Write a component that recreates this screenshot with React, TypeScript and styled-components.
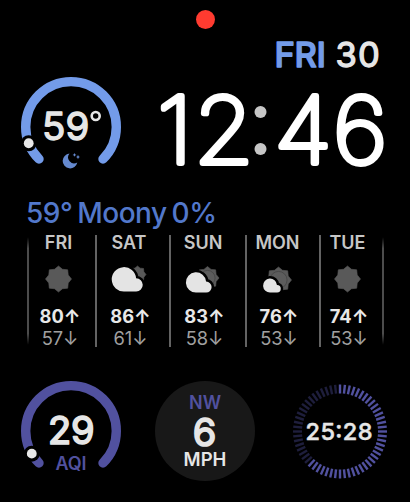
import React from 'react';
import styled, { createGlobalStyle } from 'styled-components';

const Global = createGlobalStyle`
  * { box-sizing: border-box; }
  body { margin: 0; background: #000; }
`;

const face = 'Inter, "Liberation Sans", sans-serif';

const Watch = styled.main`
  width: 410px;
  height: 502px;
  overflow: hidden;
  background: #000;
  color: #e6e6e6;
  font-family: ${face};
  display: flex;
  flex-direction: column;
`;

const StatusBar = styled.header`
  height: 39px;
  padding-top: 10px;
  display: flex;
  justify-content: center;
`;

const RedDot = styled.span`
  width: 19px;
  height: 19px;
  border-radius: 50%;
  background: #ff3b30;
`;

const Top = styled.section`
  height: 155px;
  display: grid;
  grid-template-columns: 155px 235px;
`;

const GaugeSlot = styled.div`
  padding: 35px 0 0 18px;
`;

const Clock = styled.div`
  display: flex;
  flex-direction: column;
`;

const Drawing = styled.svg`
  display: block;
  overflow: visible;
  flex: none;
`;

const Numerals = styled.text<{ $size: number; $weight: number; $stroke?: number; $color?: string }>`
  font-family: ${face};
  font-size: ${p => p.$size}px;
  font-weight: ${p => p.$weight};
  fill: ${p => p.$color ?? '#e6e6e6'};
  stroke: ${p => p.$color ?? '#e6e6e6'};
  stroke-width: ${p => p.$stroke ?? 0}px;
  stroke-linejoin: round;
  stroke-linecap: round;
`;

const Headline = styled.h1`
  margin: 0;
  height: 41px;
  padding: 0 0 0 26px;
  line-height: 38px;
  font-size: 28px;
  font-weight: 550;
  letter-spacing: -0.5px;
  word-spacing: -2px;
  color: #5278cb;
  white-space: pre;
`;

const Forecast = styled.section`
  height: 112px;
  margin-left: 27px;
  display: flex;
`;

const Rule = styled.i<{ $edge?: boolean }>`
  width: 2px;
  flex: none;
  background: ${p => (p.$edge ? 'linear-gradient(transparent 2%, #4c4c4c 12%, #4c4c4c 88%, transparent 98%)' : '#636363')};
`;

const Day = styled.div<{ $w: number }>`
  width: ${p => p.$w}px;
  flex: none;
`;

const DayStack = styled.div<{ $w: number }>`
  width: ${p => p.$w}px;
  display: flex;
  flex-direction: column;
  align-items: center;
`;

const DayName = styled.span`
  height: 16px;
  line-height: 16px;
  font-size: 18px;
  font-weight: 600;
  color: #c6c6c6;
`;

const IconBox = styled.span`
  height: 54px;
  display: flex;
  align-items: center;
`;

const Temp = styled.span<{ $low?: boolean }>`
  height: 21.5px;
  line-height: ${p => (p.$low ? 22 : 23)}px;
  padding-left: 3px;
  font-size: 18.3px;
  white-space: pre;
  font-weight: ${p => (p.$low ? 400 : 700)};
  color: ${p => (p.$low ? '#a0a0a0' : '#e8e8e8')};
`;

const Bottom = styled.section`
  height: 155px;
  padding: 31px 18px 0 18px;
  display: flex;
`;

const Wind = styled.div`
  width: 100px;
  height: 100px;
  margin: 3px 35px 0 31px;
  padding-top: 12px;
  border-radius: 50%;
  background: #181818;
  display: flex;
  flex-direction: column;
  align-items: center;
`;

const WindLabel = styled.span<{ $accent?: boolean }>`
  height: 19px;
  line-height: 19px;
  font-size: ${p => (p.$accent ? 18 : 18.5)}px;
  font-weight: 600;
  color: ${p => (p.$accent ? '#51519f' : '#e6e6e6')};
`;

const Gauge = ({ color, angle, children }: { color: string; angle: number; children: React.ReactNode }) => {
  const a = (angle * Math.PI) / 180;
  const mx = 53 + 45.3 * Math.cos(a);
  const my = 53 + 45.3 * Math.sin(a);
  return (
    <Drawing width="106" height="106" viewBox="0 0 106 106">
      <path d="M21 85A45.3 45.3 0 1 1 85 85" fill="none" stroke={color} strokeWidth="9.4" strokeLinecap="round" />
      <circle cx={mx} cy={my} r="8" fill="#000" />
      <circle cx={mx} cy={my} r="4.9" fill="#e8e8e8" />
      {children}
    </Drawing>
  );
};

const sunPoints = (cx: number, cy: number, r: number) =>
  Array.from({ length: 16 }, (_, i) => {
    const rr = i % 2 ? r * 0.81 : r;
    const t = (i * Math.PI) / 8;
    return `${cx + rr * Math.sin(t)},${cy - rr * Math.cos(t)}`;
  }).join(' ');

const Sun = ({ x, y, r = 13, ring = false }: { x: number; y: number; r?: number; ring?: boolean }) => (
  <>
    <polygon points={sunPoints(x, y, r)} fill="#595959" stroke="#595959" strokeWidth="0.6" strokeLinejoin="round" />
    {ring && <circle cx={x} cy={y} r={r * 0.66} fill="#5c5c5c" stroke="#484848" strokeWidth="1" />}
  </>
);

const Cloud = ({ x, y, scale }: { x: number; y: number; scale: number }) => (
  <path
    d="M12 24.500A12.200 12.200 0 1 1 23.600 11.300A6.600 6.600 0 0 1 23.700 24.500Z"
    transform={`translate(${x} ${y}) scale(${scale})`}
    fill="#e4e4e4"
    stroke="#000"
    strokeWidth={5 / scale}
    paintOrder="stroke"
  />
);

const Weather = ({ kind }: { kind: string }) => (
  <Drawing width="34" height="30" viewBox="0 0 34 30">
    {kind === 'sun' && <Sun x={16.5} y={16} />}
    {kind === 'cloudy' && (
      <>
        <Sun x={25.5} y={11.5} r={8.5} />
        <Cloud x={0.5} y={4} scale={1} />
      </>
    )}
    {kind === 'partly' && (
      <>
        <Sun x={21.5} y={15} r={11.5} ring />
        <Cloud x={0.5} y={9.2} scale={0.83} />
      </>
    )}
    {kind === 'mostly' && (
      <>
        <Sun x={17.5} y={17} r={13} ring />
        <Cloud x={2.5} y={15.5} scale={0.57} />
      </>
    )}
  </Drawing>
);

const days = [
  { name: 'FRI', kind: 'sun', hi: 80, lo: 57, w: 66, inner: 59 },
  { name: 'SAT', kind: 'cloudy', hi: 86, lo: 61, w: 72, inner: 64 },
  { name: 'SUN', kind: 'partly', hi: 83, lo: 58, w: 74, inner: 64 },
  { name: 'MON', kind: 'mostly', hi: 76, lo: 53, w: 72, inner: 61 },
  { name: 'TUE', kind: 'sun', hi: 74, lo: 53, w: 61, inner: 53 },
];

export default function App() {
  return (
    <>
      <Global />
      <Watch>
        <StatusBar><RedDot /></StatusBar>
        <Top>
          <GaugeSlot>
            <Gauge color="#739be9" angle={159}>
              <Numerals x="24 47.5" y="66" $size={38.5} $weight={400} $stroke={1.3}>59</Numerals>
              <circle cx="77.700" cy="42" r="4" fill="none" stroke="#e6e6e6" strokeWidth="2.600" />
              <path d="M51.500 79.600A7.400 7.400 0 1 0 59.300 88.500A6 6 0 0 1 51.500 79.600Z" fill="#6589cf" />
              <path d="M56.500 79l.6 1.300 1.300.6-1.300.6-.6 1.300-.6-1.300-1.300-.6 1.300-.6zM60 80.800l.6 1.500 1.300.7-1.300.7-.6 1.500-.6-1.500-1.300-.7 1.300-.7z" fill="#6589cf" />
            </Gauge>
          </GaugeSlot>
          <Clock>
            <Drawing width="226" height="32">
              <Numerals x="119.500" y="27.500" $size={34.5} $weight={500} $stroke={1.4} $color="#739be9" textLength="51.500">FRI</Numerals>
              <Numerals x="180.500 203" y="27.500" $size={34.5} $weight={400} $stroke={1.3}>30</Numerals>
            </Drawing>
            <Drawing width="235" height="110">
              <Numerals x="1.8 36.5 112.6 167.8" y="91.800" transform="scale(1.06 1)" $size={91.5} $weight={100} $stroke={5.8} $color="#fff">1246</Numerals>
              <circle cx="105.500" cy="41" r="6" fill="#c6c6c6" />
              <circle cx="105.500" cy="78" r="6" fill="#c6c6c6" />
            </Drawing>
          </Clock>
        </Top>
        <Headline>59° Moony 0%</Headline>
        <Forecast>
          {days.map((d, i) => (
            <React.Fragment key={d.name}>
              <Rule $edge={i === 0} />
              <Day $w={d.w}>
                <DayStack $w={d.inner}>
                  <DayName>{d.name}</DayName>
                  <IconBox><Weather kind={d.kind} /></IconBox>
                  <Temp>{d.hi}↑</Temp>
                  <Temp $low>{d.lo}↓</Temp>
                </DayStack>
              </Day>
            </React.Fragment>
          ))}
          <Rule $edge />
        </Forecast>
        <Bottom>
          <Gauge color="#51519f" angle={150}>
            <Numerals x="30 53" y="66" $size={38} $weight={400} $stroke={1.7}>29</Numerals>
            <Numerals x="37.500" y="91.500" $size={18} $weight={600} $color="#51519f" textLength="31">AQI</Numerals>
          </Gauge>
          <Wind>
            <WindLabel $accent>NW</WindLabel>
            <Drawing width="40" height="38">
              <Numerals x="19.5" y="34" textAnchor="middle" $size={38} $weight={400} $stroke={1.7}>6</Numerals>
            </Drawing>
            <WindLabel>MPH</WindLabel>
          </Wind>
          <Drawing width="100" height="106" viewBox="0 0 100 106">
            {Array.from({ length: 60 }, (_, i) => (
              <line key={i} x1="50" x2="50" y1="6.500" y2="15.500" stroke={i <= 37 ? '#51519f' : '#1e1e3c'} strokeWidth="2.400" transform={`rotate(${i * 6} 50 53.500)`} />
            ))}
            <Numerals x="15.500" y="61.500" $size={23.5} $weight={500} $stroke={0.5} textLength="67">25:28</Numerals>
          </Drawing>
        </Bottom>
      </Watch>
    </>
  );
}
